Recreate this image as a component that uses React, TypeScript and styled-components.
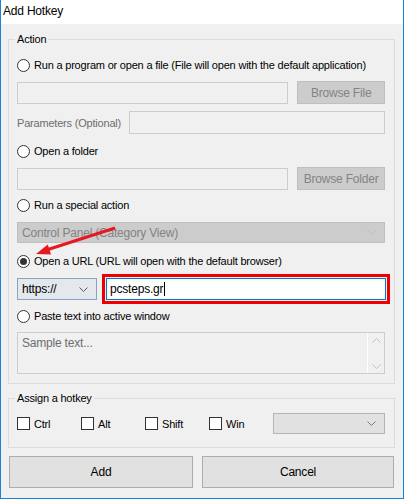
import React from "react";
import styled, { createGlobalStyle } from "styled-components";

const GlobalStyle = createGlobalStyle`
  body {
    margin: 0;
    background: #ffffff;
    font-family: "Liberation Sans", Arial, sans-serif;
    font-size: 11px;
    letter-spacing: -0.2px;
    color: #000;
  }
  * {
    box-sizing: border-box;
  }
`;

const Window = styled.div`
  position: relative;
  width: 404px;
  height: 499px;
  display: flex;
  flex-direction: column;
  border: 1px solid #1883d7;
  border-top: none;
  background: #f0f0f0;
`;

const TitleBar = styled.div`
  height: 25px;
  line-height: 23px;
  padding-left: 2px;
  font-size: 12px;
  background: #ffffff;
`;

const Body = styled.div`
  flex: 1;
  display: flex;
  flex-direction: column;
  padding: 15px 8px 10px 7px;
`;

const Group = styled.div<{ $mt?: number }>`
  position: relative;
  display: flex;
  flex-direction: column;
  margin-top: ${(p) => p.$mt ?? 0}px;
  border: 1px solid #dcdcdc;
`;

const ActionGroup = styled(Group)`
  padding: 17px 9px 9px 8px;
`;

const HotkeyGroup = styled(Group)`
  padding: 14px 9px 13px 8px;
  flex-direction: row;
  align-items: center;
`;

const Legend = styled.span`
  position: absolute;
  top: -8px;
  left: 6px;
  padding: 0 2px;
  line-height: 15px;
  background: #f0f0f0;
`;

const Row = styled.div<{ $mt?: number; $h: number }>`
  display: flex;
  align-items: center;
  height: ${(p) => p.$h}px;
  margin-top: ${(p) => p.$mt ?? 0}px;
  gap: 9px;
`;

const OptionLabel = styled.label`
  display: flex;
  align-items: center;
  gap: 4px;
  height: 16px;
  white-space: nowrap;
`;

const RadioCircle = styled.span<{ $checked?: boolean }>`
  width: 13px;
  height: 13px;
  border-radius: 50%;
  border: 1px solid #333333;
  background: #ffffff;
  display: flex;
  align-items: center;
  justify-content: center;
  &::after {
    content: "";
    display: ${(p) => (p.$checked ? "block" : "none")};
    width: 7px;
    height: 7px;
    border-radius: 50%;
    background: #333333;
  }
`;

const CheckBox = styled.span`
  width: 13px;
  height: 13px;
  border: 1px solid #333333;
  background: #ffffff;
`;

const TextBox = styled.div<{ $w: number; $h?: number; $focus?: boolean }>`
  width: ${(p) => p.$w}px;
  height: ${(p) => p.$h ?? 22}px;
  display: flex;
  align-items: center;
  padding-left: 3px;
  border: 1px solid ${(p) => (p.$focus ? "#0078d7" : "#cccccc")};
  background: ${(p) => (p.$focus ? "#ffffff" : "#f0f0f0")};
  font-size: 12px;
`;

const Highlight = styled.div`
  outline: 3px solid #ee0000;
  outline-offset: 1px;
`;

const Caret = styled.span`
  display: inline-block;
  width: 1px;
  height: 14px;
  margin-left: 1px;
  background: #000;
`;

const Button = styled.div<{ $disabled?: boolean; $w: number; $h?: number }>`
  width: ${(p) => p.$w}px;
  height: ${(p) => p.$h ?? 23}px;
  display: flex;
  align-items: center;
  justify-content: center;
  border: 1px solid ${(p) => (p.$disabled ? "#bfbfbf" : "#adadad")};
  background: ${(p) => (p.$disabled ? "#cccccc" : "#e1e1e1")};
  color: ${(p) => (p.$disabled ? "#838383" : "#000")};
  font-size: 12px;
`;

const DimLabel = styled.span`
  width: 103px;
  color: #6d6d6d;
  white-space: nowrap;
`;

type ComboKind = "disabled" | "hover" | "normal";

const comboColors: Record<ComboKind, { bg: string; border: string; text: string; arrow: string }> = {
  disabled: { bg: "#cccccc", border: "#bfbfbf", text: "#838383", arrow: "#bfbfbf" },
  hover: { bg: "#e4e8ec", border: "#88a4c0", text: "#000", arrow: "#5a5a5a" },
  normal: { bg: "#e1e1e1", border: "#b4b4b4", text: "#000", arrow: "#7a7a7a" },
};

const ComboBox = styled.div<{ $w: number; $h: number; $kind: ComboKind }>`
  width: ${(p) => p.$w}px;
  height: ${(p) => p.$h}px;
  flex: none;
  display: flex;
  align-items: center;
  justify-content: space-between;
  padding: 0 8px 0 4px;
  border: 1px solid ${(p) => comboColors[p.$kind].border};
  background: ${(p) => comboColors[p.$kind].bg};
  color: ${(p) => comboColors[p.$kind].text};
  font-size: 12px;
`;

const TextArea = styled.div`
  margin-top: 8px;
  height: 42px;
  display: flex;
  border: 1px solid #cccccc;
  background: #f0f0f0;
`;

const Placeholder = styled.div`
  flex: 1;
  padding: 3px 4px;
  color: #6d6d6d;
  font-size: 12px;
`;

const ScrollBar = styled.div`
  width: 17px;
  border-left: 1px solid #ffffff;
  display: flex;
  flex-direction: column;
  justify-content: space-between;
  align-items: center;
  padding: 5px 0 4px;
`;

const CheckItem = styled.div`
  width: 64px;
  flex: none;
`;

const ButtonRow = styled.div`
  display: flex;
  gap: 9px;
  margin: 8px 1px 0 1px;
`;

const ArrowOverlay = styled.svg`
  position: absolute;
  left: -1px;
  top: 0;
  pointer-events: none;
`;

const Chevron = ({ color, up }: { color: string; up?: boolean }) => (
  <svg width="9" height="5" viewBox="0 0 9 5">
    <polyline
      points={up ? "0.5,4.5 4.5,0.5 8.5,4.5" : "0.5,0.5 4.5,4.5 8.5,0.5"}
      fill="none"
      stroke={color}
      strokeWidth="1"
    />
  </svg>
);

const Radio = ({ label, checked }: { label: string; checked?: boolean }) => (
  <OptionLabel>
    <RadioCircle $checked={checked} />
    {label}
  </OptionLabel>
);

const Check = ({ label }: { label: string }) => (
  <CheckItem>
    <OptionLabel>
      <CheckBox />
      {label}
    </OptionLabel>
  </CheckItem>
);

export default function App() {
  return (
    <>
      <GlobalStyle />
      <Window>
        <TitleBar>Add Hotkey</TitleBar>
        <Body>
          <ActionGroup>
            <Legend>Action</Legend>
            <Row $h={16}>
              <Radio label="Run a program or open a file (File will open with the default application)" />
            </Row>
            <Row $h={23} $mt={8}>
              <TextBox $w={272} />
              <Button $disabled $w={88}>Browse File</Button>
            </Row>
            <Row $h={23} $mt={7} style={{ gap: 9 }}>
              <DimLabel>Parameters (Optional)</DimLabel>
              <TextBox $w={256} $h={23} />
            </Row>
            <Row $h={16} $mt={9}>
              <Radio label="Open a folder" />
            </Row>
            <Row $h={23} $mt={8}>
              <TextBox $w={272} />
              <Button $disabled $w={88}>Browse Folder</Button>
            </Row>
            <Row $h={16} $mt={7}>
              <Radio label="Run a special action" />
            </Row>
            <Row $h={21} $mt={9}>
              <ComboBox $w={368} $h={21} $kind="disabled">
                Control Panel (Category View)
                <Chevron color="#bfbfbf" />
              </ComboBox>
            </Row>
            <Row $h={16} $mt={10}>
              <Radio label="Open a URL (URL will open with the default browser)" checked />
            </Row>
            <Row $h={22} $mt={9}>
              <ComboBox $w={80} $h={22} $kind="hover">
                https://
                <Chevron color="#5a5a5a" />
              </ComboBox>
              <Highlight>
                <TextBox $w={280} $focus>
                  pcsteps.gr
                  <Caret />
                </TextBox>
              </Highlight>
            </Row>
            <Row $h={16} $mt={8}>
              <Radio label="Paste text into active window" />
            </Row>
            <TextArea>
              <Placeholder>Sample text...</Placeholder>
              <ScrollBar>
                <Chevron color="#c0c0c0" up />
                <Chevron color="#c0c0c0" />
              </ScrollBar>
            </TextArea>
          </ActionGroup>

          <HotkeyGroup $mt={14}>
            <Legend>Assign a hotkey</Legend>
            <Check label="Ctrl" />
            <Check label="Alt" />
            <Check label="Shift" />
            <Check label="Win" />
            <ComboBox $w={112} $h={21} $kind="normal">
              <span />
              <Chevron color="#7a7a7a" />
            </ComboBox>
          </HotkeyGroup>

          <ButtonRow>
            <Button $w={184} $h={32}>Add</Button>
            <Button $w={192} $h={32}>Cancel</Button>
          </ButtonRow>
        </Body>

        <ArrowOverlay width="404" height="499" viewBox="0 0 404 499">
          <line x1="115" y1="228" x2="48" y2="249.5" stroke="#e5191f" strokeWidth="3" />
          <polygon points="36,254 47.8,244.6 51,254.6" fill="#e5191f" />
        </ArrowOverlay>
      </Window>
    </>
  );
}
